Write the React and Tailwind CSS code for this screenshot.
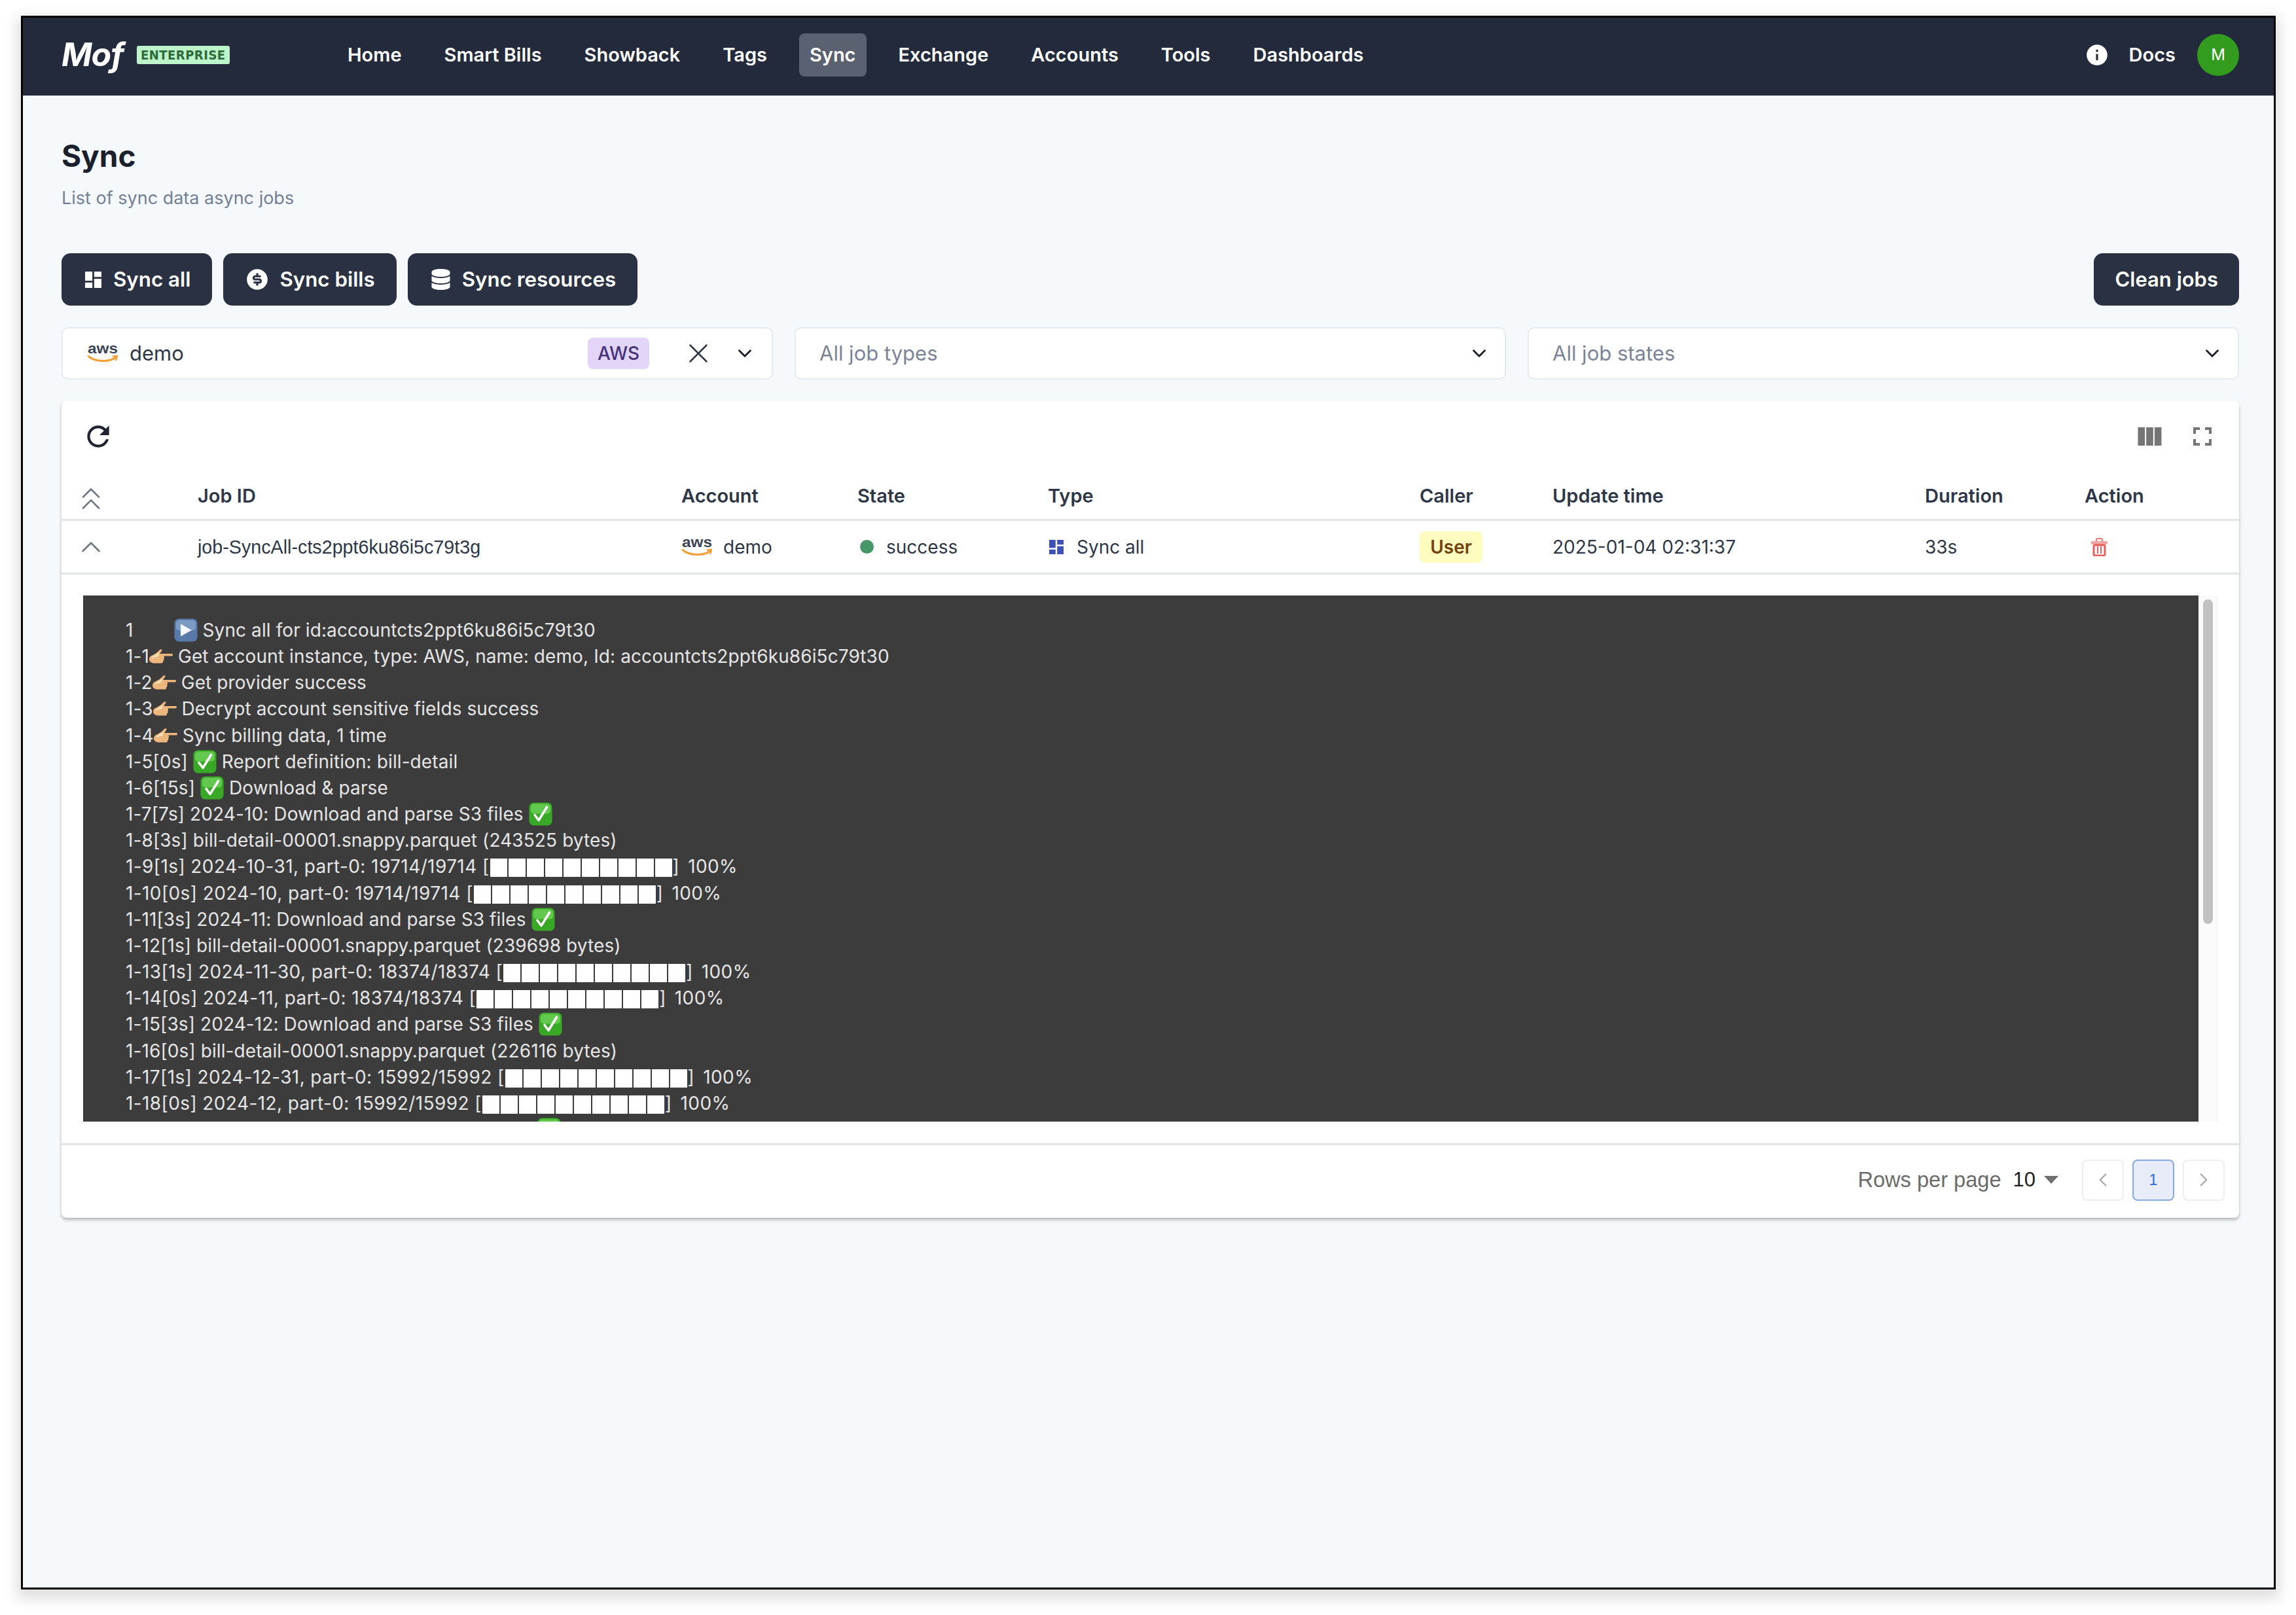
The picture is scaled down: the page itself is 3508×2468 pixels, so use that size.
import React from "react";
import { ChevronDown, ChevronUp, ChevronsUp, ChevronLeft, ChevronRight, X } from "lucide-react";
import { RiMoneyDollarCircleFill, RiInformationFill } from "react-icons/ri";
import { FaDatabase } from "react-icons/fa";

const DashboardIcon = ({ className }) => (
  <svg viewBox="3 3 18 18" className={className} fill="currentColor">
    <path d="M3 13h8V3H3v10zm0 8h8v-6H3v6zm10 0h8V11h-8v10zm0-18v6h8V3h-8z" />
  </svg>
);

const TrashIcon = () => (
  <svg viewBox="0 0 25 28" className="w-[25px] h-[28px]">
    <path d="M8 6V3a2 2 0 0 1 2-2h5a2 2 0 0 1 2 2v3" fill="none" stroke="#ec7a76" strokeWidth="2" />
    <rect x="0" y="5" width="25" height="5" rx="1" fill="#f2a5a0" />
    <rect x="4" y="11" width="17" height="16" rx="2" fill="none" stroke="#e65f5c" strokeWidth="3" />
    <rect x="9" y="13" width="2" height="11" fill="#e65f5c" />
    <rect x="14" y="13" width="2" height="11" fill="#e65f5c" />
  </svg>
);

const AwsLogo = () => (
  <svg viewBox="0 0 48 30" className="w-[48px] h-[30px] shrink-0 overflow-visible">
    <text x="24" y="15" textAnchor="middle" fontFamily="'Liberation Sans', sans-serif" fontWeight="700" fontSize="22" fill="#3b4456" textLength="46" lengthAdjust="spacingAndGlyphs">aws</text>
    <path d="M2 19.5C12 28 34 29 44 21" fill="none" stroke="#f59e36" strokeWidth="3" strokeLinecap="round" />
    <path d="M39 19.5l7-.5-2 7" fill="none" stroke="#f59e36" strokeWidth="2.4" strokeLinejoin="round" />
  </svg>
);

const PlayEmoji = () => (
  <svg viewBox="0 0 36 36" className="inline-block w-[36px] h-[36px] align-[-8px]">
    <rect x="0.5" y="0.5" width="35" height="35" rx="7" fill="#587aa8" />
    <rect x="3" y="2.5" width="30" height="16" rx="5" fill="#7d9cc4" />
    <path d="M10 8.5L27 18 10 27.5z" fill="#f4f7fb" />
  </svg>
);

const CheckEmoji = () => (
  <svg viewBox="0 0 36 36" className="inline-block w-[36px] h-[36px] align-[-8px]">
    <rect x="0.5" y="0.5" width="35" height="35" rx="7" fill="#3aa827" />
    <rect x="3" y="2.5" width="30" height="15" rx="5" fill="#63c94e" />
    <path d="M9 19.5l6 8L27.5 7.5" fill="none" stroke="#fff" strokeWidth="3.6" strokeLinecap="round" strokeLinejoin="round" />
  </svg>
);

const HandEmoji = () => (
  <svg viewBox="0 0 36 24" className="inline-block w-[36px] h-[24px] align-[-3px]">
    <path d="M0 15.500c0-3.500 2.500-5.500 5.500-6.500l6-3.500c2-2 4-4.500 6.500-5.500 1.500 0 2 2 .5 3.500l-2.500 3.500H34.500c2 0 2 3.500 0 3.500H22c1.500 1 1.500 3.500 0 4 1 1 .5 3.500-1 3.800.5 1.500-.5 3.200-2 3.200H8c-5 0-8-2.500-8-6z" fill="#ecb67c" />
    <path d="M4 12l8-5c1-1 2.500-1.500 3.500-1.500l-2.500 6c-3 0-6 1-9 3z" fill="#f9dfb9" />
  </svg>
);

const Bar = () => (
  <span className="inline-flex gap-[2px] align-[-6px] mx-[1px] tracking-normal">
    {[0, 1, 2, 3, 4, 5, 6, 7, 8, 9].map((i) => (
      <span key={i} className="block w-[26px] h-[28px] bg-white" />
    ))}
  </span>
);

const Pct = () => <span className="ml-[13px]">100%</span>;

const logLines = [
  ["1", <span key="g" className="inline-block w-[62px]" />, <PlayEmoji key="e" />, " Sync all for id:accountcts2ppt6ku86i5c79t30"],
  ["1-1", <HandEmoji key="e" />, " Get account instance, type: AWS, name: demo, Id: accountcts2ppt6ku86i5c79t30"],
  ["1-2", <HandEmoji key="e" />, " Get provider success"],
  ["1-3", <HandEmoji key="e" />, " Decrypt account sensitive fields success"],
  ["1-4", <HandEmoji key="e" />, " Sync billing data, 1 time"],
  ["1-5[0s] ", <CheckEmoji key="e" />, " Report definition: bill-detail"],
  ["1-6[15s] ", <CheckEmoji key="e" />, " Download & parse"],
  ["1-7[7s] 2024-10: Download and parse S3 files ", <CheckEmoji key="e" />],
  ["1-8[3s] bill-detail-00001.snappy.parquet (243525 bytes)"],
  ["1-9[1s] 2024-10-31, part-0: 19714/19714 [", <Bar key="b" />, "]", <Pct key="p" />],
  ["1-10[0s] 2024-10, part-0: 19714/19714 [", <Bar key="b" />, "]", <Pct key="p" />],
  ["1-11[3s] 2024-11: Download and parse S3 files ", <CheckEmoji key="e" />],
  ["1-12[1s] bill-detail-00001.snappy.parquet (239698 bytes)"],
  ["1-13[1s] 2024-11-30, part-0: 18374/18374 [", <Bar key="b" />, "]", <Pct key="p" />],
  ["1-14[0s] 2024-11, part-0: 18374/18374 [", <Bar key="b" />, "]", <Pct key="p" />],
  ["1-15[3s] 2024-12: Download and parse S3 files ", <CheckEmoji key="e" />],
  ["1-16[0s] bill-detail-00001.snappy.parquet (226116 bytes)"],
  ["1-17[1s] 2024-12-31, part-0: 15992/15992 [", <Bar key="b" />, "]", <Pct key="p" />],
  ["1-18[0s] 2024-12, part-0: 15992/15992 [", <Bar key="b" />, "]", <Pct key="p" />],
  [<span key="g" className="inline-block w-[629px]" />, <CheckEmoji key="e" />],
];

const navItems = ["Home", "Smart Bills", "Showback", "Tags", "Sync", "Exchange", "Accounts", "Tools", "Dashboards"];

const ActionButton = ({ icon, children }) => (
  <button className="h-[80px] pl-[36px] pr-[33px] rounded-[14px] bg-[#2a3142] text-white text-[31.300px] font-semibold flex items-center gap-[18px]">
    {icon}
    {children}
  </button>
);

const gridCols = "grid grid-cols-[208px_739px_269px_291px_568px_203px_569px_244px_1fr] items-center";

export default function App() {
  return (
    <div className="w-[3508px] h-[2468px] bg-white pt-[24px] pl-[32px] overflow-hidden font-['Inter',sans-serif]">
      <div className="w-[3445px] h-[2405px] border-[3px] border-black bg-[#f6f9fc] shadow-[0_8px_20px_6px_rgba(0,0,0,0.13)]">
        <header className="h-[119px] bg-[#232a3c] pl-[59px] pr-[53px] pb-[6px] flex items-center">
          <div className="flex items-center w-[421px] shrink-0">
            <span className="text-white text-[50px] font-bold italic tracking-[-1px]">Mof</span>
            <span className="ml-[20px] h-[28px] w-[142px] rounded-[3px] bg-[#bdf4c9] text-[#2f6b3c] text-[20px] font-bold tracking-[0.5px] flex items-center justify-center font-['DejaVu_Sans_Condensed','Inter',sans-serif]">ENTERPRISE</span>
          </div>
          <nav className="flex items-center gap-[33px]">
            {navItems.map((n) => (
              <a key={n} className={`h-[66px] px-[16px] rounded-[8px] flex items-center text-[29px] font-semibold text-white ${n === "Sync" ? "bg-[#5a6170]" : ""}`}>
                {n}
              </a>
            ))}
          </nav>
          <div className="ml-auto flex items-center">
            <RiInformationFill className="w-[38px] h-[38px] text-white" />
            <span className="ml-[30px] text-[29px] font-semibold text-white">Docs</span>
            <span className="ml-[33px] w-[64px] h-[64px] rounded-full bg-[#339b1e] text-white text-[24px] font-normal flex items-center justify-center">M</span>
          </div>
        </header>

        <main className="pl-[59px] pr-[53px]">
          <h1 className="pt-[64px] text-[46px] leading-[56px] font-bold text-[#1a202c]">Sync</h1>
          <p className="mt-[17px] text-[27px] leading-[40px] text-[#718096]">List of sync data async jobs</p>

          <div className="mt-[64px] flex items-center gap-[17px]">
            <ActionButton icon={<DashboardIcon className="w-[25px] h-[25px]" />}>Sync all</ActionButton>
            <ActionButton icon={<RiMoneyDollarCircleFill className="w-[38px] h-[38px] -mx-[3px]" />}>Sync bills</ActionButton>
            <ActionButton icon={<FaDatabase className="w-[29px] h-[32px]" />}>Sync resources</ActionButton>
            <button className="ml-auto h-[80px] px-[32px] rounded-[14px] bg-[#2a3142] text-white text-[31px] font-semibold">Clean jobs</button>
          </div>

          <div className="mt-[33px] grid grid-cols-3 gap-[33px]">
            <div className="h-[80px] bg-white border-2 border-[#e6eaf1] rounded-[10px] flex items-center pl-[37px] pr-[24px]">
              <AwsLogo />
              <span className="ml-[17px] text-[31px] text-[#2d3748]">demo</span>
              <span className="ml-auto h-[48px] w-[94px] justify-center rounded-[8px] bg-[#e3d5f8] text-[#44337a] text-[28px] font-medium flex items-center">AWS</span>
              <X className="ml-[50px] w-[50px] h-[50px] text-[#2d3748]" strokeWidth={1.2} />
              <ChevronDown className="ml-[29px] w-[34px] h-[34px] text-[#1a202c]" strokeWidth={2} />
            </div>
            <div className="h-[80px] bg-white border-2 border-[#e6eaf1] rounded-[10px] flex items-center justify-between pl-[36px] pr-[22px]">
              <span className="text-[31px] text-[#7b8497]">All job types</span>
              <ChevronDown className="w-[34px] h-[34px] text-[#1a202c]" strokeWidth={2} />
            </div>
            <div className="h-[80px] bg-white border-2 border-[#e6eaf1] rounded-[10px] flex items-center justify-between pl-[36px] pr-[22px]">
              <span className="text-[31px] text-[#7b8497]">All job states</span>
              <ChevronDown className="w-[34px] h-[34px] text-[#1a202c]" strokeWidth={2} />
            </div>
          </div>

          <section className="mt-[32px] h-[1249px] bg-white rounded-[8px] shadow-[0_3px_5px_rgba(0,0,0,0.28)] flex flex-col">
            <div className="h-[110px] pl-[31px] pr-[42px] flex items-center justify-between shrink-0">
              <svg viewBox="0 0 24 24" className="w-[50px] h-[50px] text-[#1f2430]" fill="currentColor">
                <path d="M17.65 6.35C16.2 4.9 14.21 4 12 4c-4.42 0-7.99 3.58-7.99 8s3.57 8 7.99 8c3.73 0 6.84-2.55 7.73-6h-2.08c-.82 2.33-3.04 4-5.65 4-3.31 0-6-2.69-6-6s2.69-6 6-6c1.66 0 3.14.69 4.22 1.78L13 11h7V4l-2.35 2.35z" />
              </svg>
              <div className="flex items-center gap-[48px] text-[#757575]">
                <svg viewBox="3 5 18 14" className="w-[37px] h-[28px]" fill="currentColor">
                  <path d="M14.67 5v14H9.33V5h5.34zm1 14H21V5h-5.33v14zm-7.34 0V5H3v14h5.33z" />
                </svg>
                <svg viewBox="5 5 14 14" className="w-[28px] h-[28px]" fill="currentColor">
                  <path d="M7 14H5v5h5v-2H7v-3zm-2-4h2V7h3V5H5v5zm12 7h-3v2h5v-5h-2v3zM14 5v2h3v3h2V5h-5z" />
                </svg>
              </div>
            </div>

            <div className={`${gridCols} h-[74px] border-b-[3px] border-[#e2e5e8] text-[29px] font-semibold text-[#2d3748] shrink-0`}>
              <span className="pl-[16px] pt-[8px]"><ChevronsUp className="w-[58px] h-[58px] text-[#6f7684]" strokeWidth={1.1} /></span>
              <span>Job ID</span>
              <span>Account</span>
              <span>State</span>
              <span>Type</span>
              <span>Caller</span>
              <span>Update time</span>
              <span>Duration</span>
              <span>Action</span>
            </div>

            <div className={`${gridCols} h-[82px] border-b-[3px] border-[#e2e5e8] text-[28px] text-[#2d3748] shrink-0`}>
              <span className="pl-[20px]"><ChevronUp className="w-[50px] h-[50px] text-[#6f7684]" strokeWidth={1.3} /></span>
              <span className="font-['Liberation_Sans',sans-serif] text-[28.700px] pt-[3px]">job-SyncAll-cts2ppt6ku86i5c79t3g</span>
              <span className="flex items-center gap-[16px]"><AwsLogo />demo</span>
              <span className="flex items-center gap-[19px] pl-[4px]"><i className="block w-[21px] h-[21px] rounded-full bg-[#48976a]" />success</span>
              <span className="flex items-center gap-[20px] pl-[2px]"><DashboardIcon className="w-[22px] h-[22px] text-[#3f51b5]" />Sync all</span>
              <span><b className="inline-flex h-[48px] w-[96px] items-center justify-center rounded-[8px] bg-[#fefcbf] text-[#744210] font-semibold">User</b></span>
              <span>2025-01-04 02:31:37</span>
              <span>33s</span>
              <span className="pl-[10px]"><TrashIcon /></span>
            </div>

            <div className="flex-1 px-[33px] pt-[32px] flex">
              <div className="flex-1 h-[804px] bg-[#3c3c3c] overflow-hidden pt-[33px] pl-[65px] text-[28px] leading-[40.15px] tracking-[0.1px] text-[#e6e6e6] whitespace-pre">
                {logLines.map((parts, i) => (
                  <div key={i} className={parts[2] === "]" ? "tracking-[0.4px]" : ""}>{parts}</div>
                ))}
              </div>
              <div className="w-[29px] h-[804px] bg-[#fafafa] border-r border-[#ededed] pt-[6px] flex justify-center">
                <div className="w-[15px] h-[496px] rounded-full bg-[#c1c1c1]" />
              </div>
            </div>

            <div className="h-[114px] pb-[5px] border-t-[3px] border-[#e2e5e8] flex items-center justify-end pr-[22px] shrink-0">
              <span className="font-['Liberation_Sans',sans-serif] text-[32.600px] text-[#6b6b6b]">Rows per page</span>
              <span className="ml-[18px] font-['Liberation_Sans',sans-serif] text-[31px] text-[#222]">10</span>
              <svg viewBox="0 0 22 12" className="ml-[13px] w-[22px] h-[12px] mr-[36px]"><path d="M0 0h22L11 12z" fill="#6f6f6f" /></svg>
              <div className="flex gap-[13px]">
                <span className="w-[64px] h-[63px] rounded-[8px] border-2 border-[#eeeeee] flex items-center justify-center"><ChevronLeft className="w-[34px] h-[34px] text-[#a8a8a8]" strokeWidth={1.6} /></span>
                <span className="w-[64px] h-[63px] rounded-[8px] border-2 border-[#86a8e2] bg-[#e7ecf8] flex items-center justify-center font-['Liberation_Sans',sans-serif] text-[24px] text-[#2f6bd6]">1</span>
                <span className="w-[64px] h-[63px] rounded-[8px] border-2 border-[#eeeeee] flex items-center justify-center"><ChevronRight className="w-[34px] h-[34px] text-[#a8a8a8]" strokeWidth={1.6} /></span>
              </div>
            </div>
          </section>
        </main>
      </div>
    </div>
  );
}
